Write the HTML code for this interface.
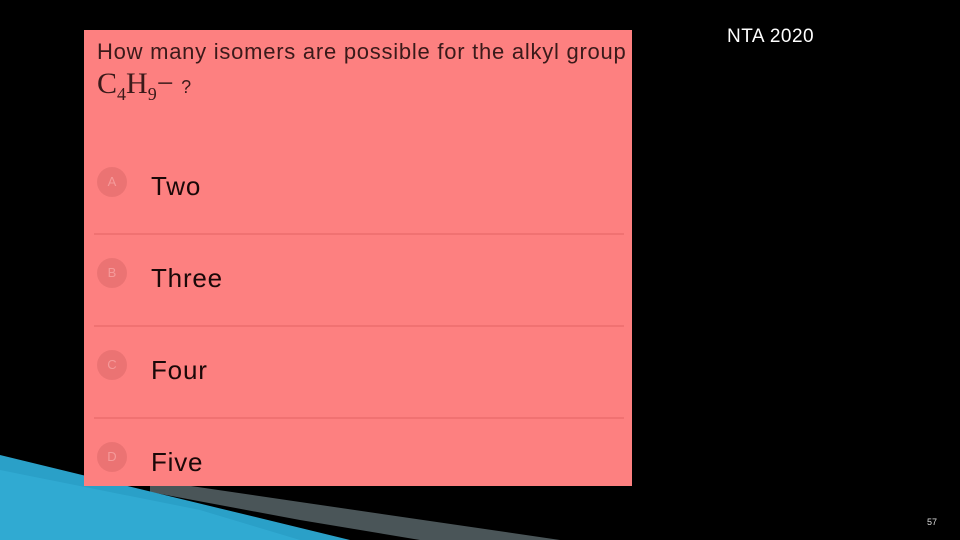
<!DOCTYPE html><html><head><style>
body{margin:0;width:960px;height:540px;background:#000;position:relative;overflow:hidden;font-family:"Liberation Sans",sans-serif}
.box{position:absolute;left:84px;top:30px;width:548px;height:456px;background:#fd8080}
.q{position:absolute;left:13px;top:9px;font-size:22px;letter-spacing:.75px;color:#3a1a1a;white-space:nowrap}
.f{position:absolute;left:13px;top:37px;font-family:"Liberation Serif",serif;font-size:30px;color:#3a1a1a}
.f sub{font-size:18px}
.o{position:absolute;left:67px;font-size:26px;color:#1a0808;letter-spacing:.8px}
.c{position:absolute;left:13px;width:30px;height:30px;border-radius:50%;background:#eb7373;color:#f59a9a;font-size:13px;text-align:center;line-height:30px}
.l{position:absolute;left:10px;width:530px;height:2px;background:#f07272}
</style></head><body>
<svg width="960" height="540" style="position:absolute;left:0;top:0">
<polygon points="150,480 300,502 560,540 420,540 300,520 150,492" fill="#4a5558"/>
<polygon points="0,455 350,540 0,540" fill="#2aa0c8"/>
<polygon points="0,470 200,510 300,540 0,540" fill="#36b0d8" opacity=".6"/>
</svg>
<div class="box">
<div class="q">How many isomers are possible for the alkyl group</div>
<div class="f">C<sub>4</sub>H<sub>9</sub>− <span style="font-family:'Liberation Sans';font-size:18px">?</span></div>
<div class="c" style="top:137px">A</div><div class="o" style="top:141px">Two</div>
<div class="l" style="top:203px"></div>
<div class="c" style="top:228px">B</div><div class="o" style="top:233px">Three</div>
<div class="l" style="top:295px"></div>
<div class="c" style="top:320px">C</div><div class="o" style="top:325px">Four</div>
<div class="l" style="top:387px"></div>
<div class="c" style="top:412px">D</div><div class="o" style="top:417px">Five</div>
</div>
<div style="position:absolute;left:727px;top:26px;color:#fff;font-size:19px;letter-spacing:.5px">NTA 2020</div>
<div style="position:absolute;left:927px;top:517px;color:#ddd;font-size:9px">57</div>
</body></html>
